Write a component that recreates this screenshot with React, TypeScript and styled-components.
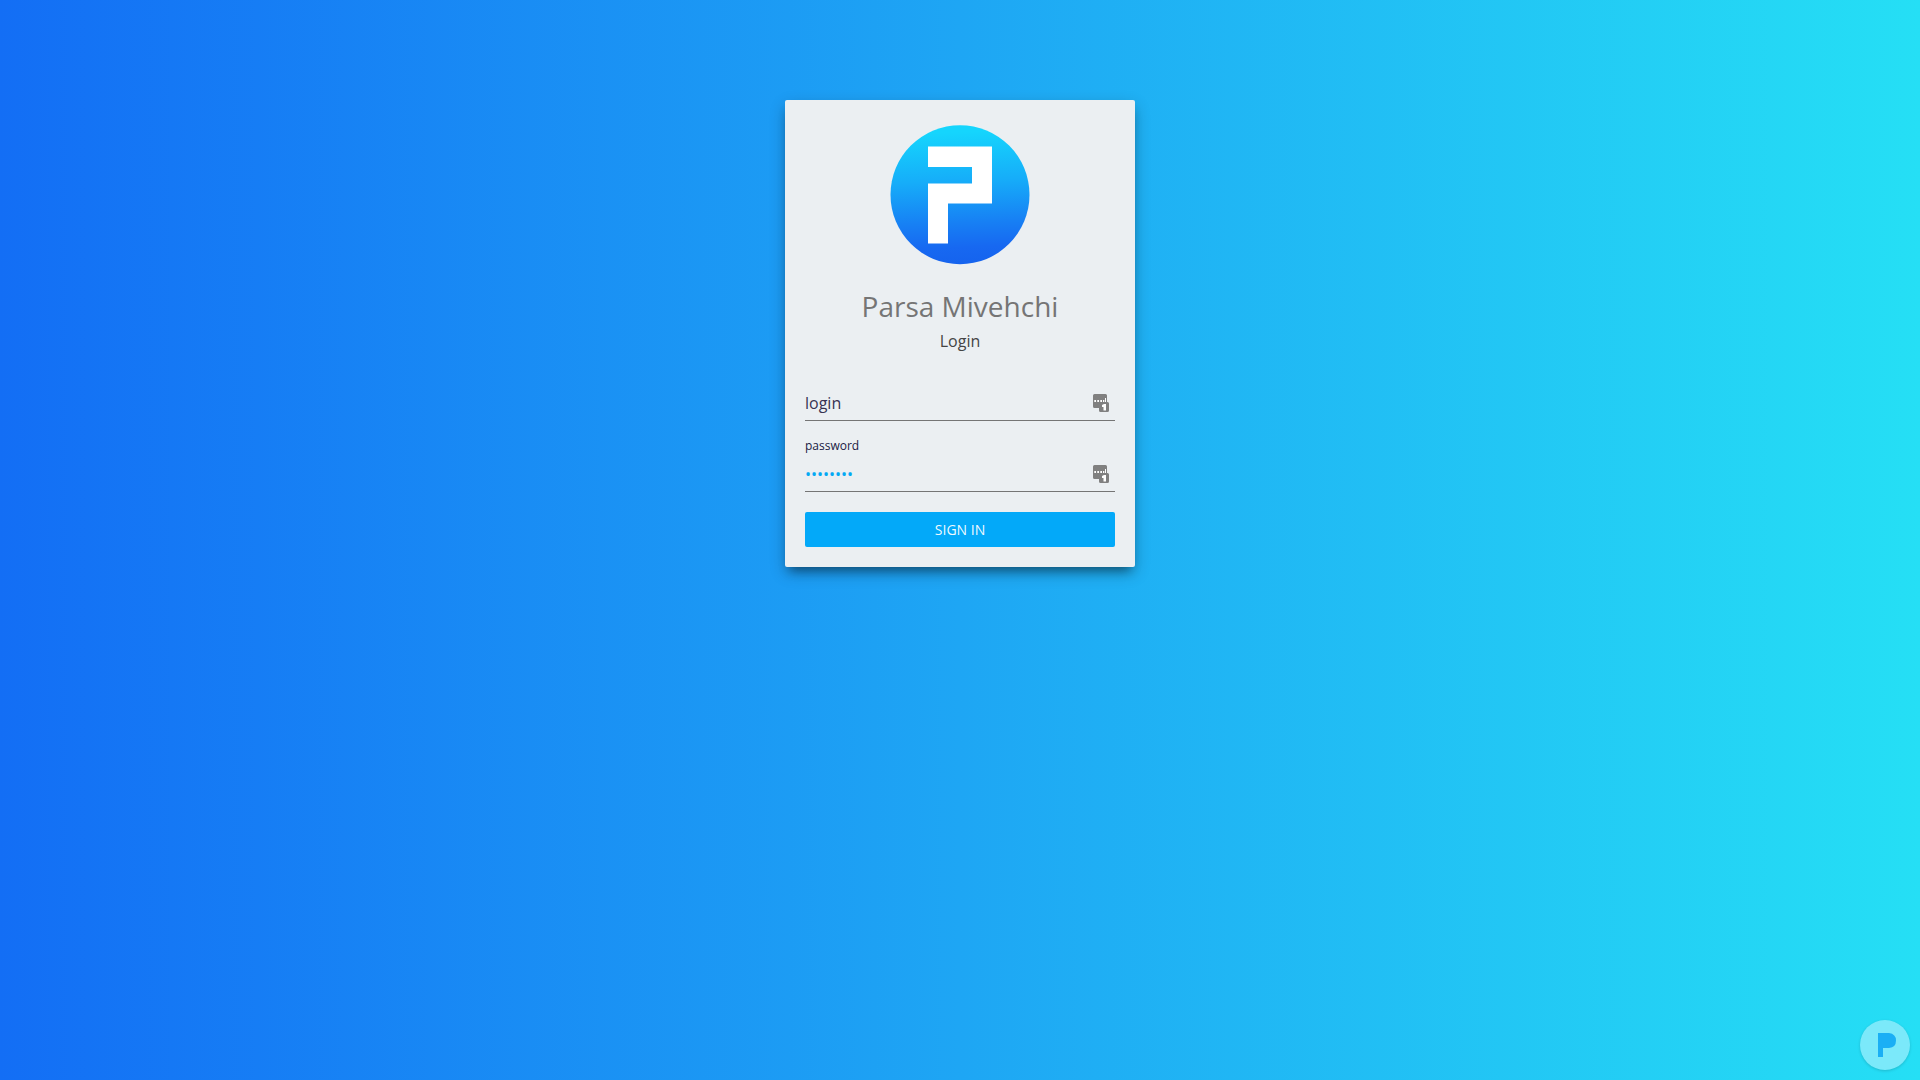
import React, { useState } from "react";
import styled, { createGlobalStyle } from "styled-components";

const GlobalStyle = createGlobalStyle`
  *, *::before, *::after { box-sizing: border-box; }
  body {
    margin: 0;
    font-family: "Open Sans", "Noto Sans", sans-serif;
    color: rgba(0, 0, 0, 0.87);
  }
`;

const Page = styled.main`
  min-height: 100vh;
  display: flex;
  justify-content: center;
  align-items: flex-start;
  padding: 100px 16px;
  background: linear-gradient(to right, #136ef5, #1ea6f4 50%, #25dff5);
`;

const Card = styled.form`
  width: 100%;
  max-width: 350px;
  display: flex;
  flex-direction: column;
  padding: 20px;
  border-radius: 2px;
  background: #ebeff2;
  box-shadow: 0 8px 10px -5px rgba(0, 0, 0, 0.4), 0 6px 16px rgba(0, 0, 0, 0.24);
`;

const Header = styled.header`
  display: flex;
  flex-direction: column;
  align-items: center;
  padding-top: 5px;
`;

const Title = styled.h1`
  margin: 20px 0 2px;
  font-size: 28px;
  line-height: 42px;
  font-weight: 400;
  color: #757575;
`;

const Subtitle = styled.h2`
  margin: 0;
  font-size: 16px;
  line-height: 24px;
  font-weight: 400;
  color: #444;
`;

const Fields = styled.div`
  display: flex;
  flex-direction: column;
  margin: 33px 0 20px;
`;

const Field = styled.div`
  display: flex;
  flex-direction: column;
`;

const Label = styled.label`
  padding: 15px 0 1px;
  font-size: 12px;
  line-height: 20px;
  color: #201a44;
`;

const InputRow = styled.div`
  display: flex;
  align-items: center;
  height: 35px;
  padding-right: 6px;
  border-bottom: 1px solid #757575;
`;

const Input = styled.input`
  flex: 1;
  min-width: 0;
  height: 34px;
  padding: 0;
  border: 0;
  outline: 0;
  background: transparent;
  font-family: inherit;
  font-size: 16px;
  color: #03a9f4;

  &::placeholder {
    color: #373353;
    opacity: 1;
  }
`;

const SubmitButton = styled.button`
  height: 35px;
  border: 0;
  border-radius: 2px;
  background: #03a9f9;
  color: rgba(255, 255, 255, 0.96);
  font-family: inherit;
  font-size: 14px;
  line-height: 20px;
  font-weight: 500;
  text-transform: uppercase;
  cursor: pointer;
`;

const FloatingButton = styled.button`
  position: fixed;
  right: 10px;
  bottom: 10px;
  width: 50px;
  height: 50px;
  display: grid;
  place-items: center;
  padding: 0;
  border: 0;
  border-radius: 50%;
  background: #7be9fa;
  box-shadow: 0 1px 3px rgba(0, 0, 0, 0.16);
  cursor: pointer;
`;

function Logo() {
  return (
    <svg width="140" height="140" viewBox="0 0 140 140" role="img" aria-label="Logo">
      <defs>
        <linearGradient id="logo-fill" x1="0.48" y1="0" x2="0.52" y2="1">
          <stop offset="0.05" stopColor="#15d5fd" />
          <stop offset="0.4" stopColor="#16adf9" />
          <stop offset="0.7" stopColor="#1780f4" />
          <stop offset="0.88" stopColor="#1768f1" />
          <stop offset="1" stopColor="#1563ee" />
        </linearGradient>
      </defs>
      <circle cx="70" cy="69.7" r="69.5" fill="url(#logo-fill)" />
      <path d="M38 21.5H102V78.5H58V118.5H38V58.5H82V42H38Z" fill="#fff" />
    </svg>
  );
}

function KeyManagerIcon() {
  return (
    <svg width="16" height="18" viewBox="0 0 16 18" aria-hidden="true">
      <path
        d="M1.5 0H12.5Q14 0 14 1.5V8H14.5Q16 8 16 9.5V16.5Q16 18 14.5 18H7.5Q6 18 6 16.5V14H1.5Q0 14 0 12.5V1.5Q0 0 1.5 0Z"
        fill="#808080"
      />
      <path d="M1.3 6H3V8H1.3ZM4.3 6H6V8H4.3ZM7.3 6H9V8H7.3ZM10 6H11.3V8H10ZM12 4H13V8H12Z" fill="#fff" />
      <path d="M9 11L11 10H13V16.5H10.5V13H9Z" fill="#fff" />
    </svg>
  );
}

function BadgeIcon() {
  return (
    <svg width="24" height="24" viewBox="0 0 24 24" aria-hidden="true">
      <path
        d="M5 0H16Q23 1 23 7.5Q23 14.5 16 15H10V24H5Z"
        fill="#1aaff5"
      />
    </svg>
  );
}

export default function App() {
  const [login, setLogin] = useState("");
  const [password, setPassword] = useState("password");

  return (
    <Page>
      <GlobalStyle />
      <Card onSubmit={(event) => event.preventDefault()}>
        <Header>
          <Logo />
          <Title>Parsa Mivehchi</Title>
          <Subtitle>Login</Subtitle>
        </Header>
        <Fields>
          <Field>
            <InputRow>
              <Input
                type="text"
                aria-label="login"
                placeholder="login"
                value={login}
                onChange={(event) => setLogin(event.target.value)}
              />
              <KeyManagerIcon />
            </InputRow>
          </Field>
          <Field>
            <Label htmlFor="password">password</Label>
            <InputRow>
              <Input
                id="password"
                type="password"
                value={password}
                onChange={(event) => setPassword(event.target.value)}
              />
              <KeyManagerIcon />
            </InputRow>
          </Field>
        </Fields>
        <SubmitButton type="submit">Sign in</SubmitButton>
      </Card>
      <FloatingButton type="button" aria-label="Open menu">
        <BadgeIcon />
      </FloatingButton>
    </Page>
  );
}
